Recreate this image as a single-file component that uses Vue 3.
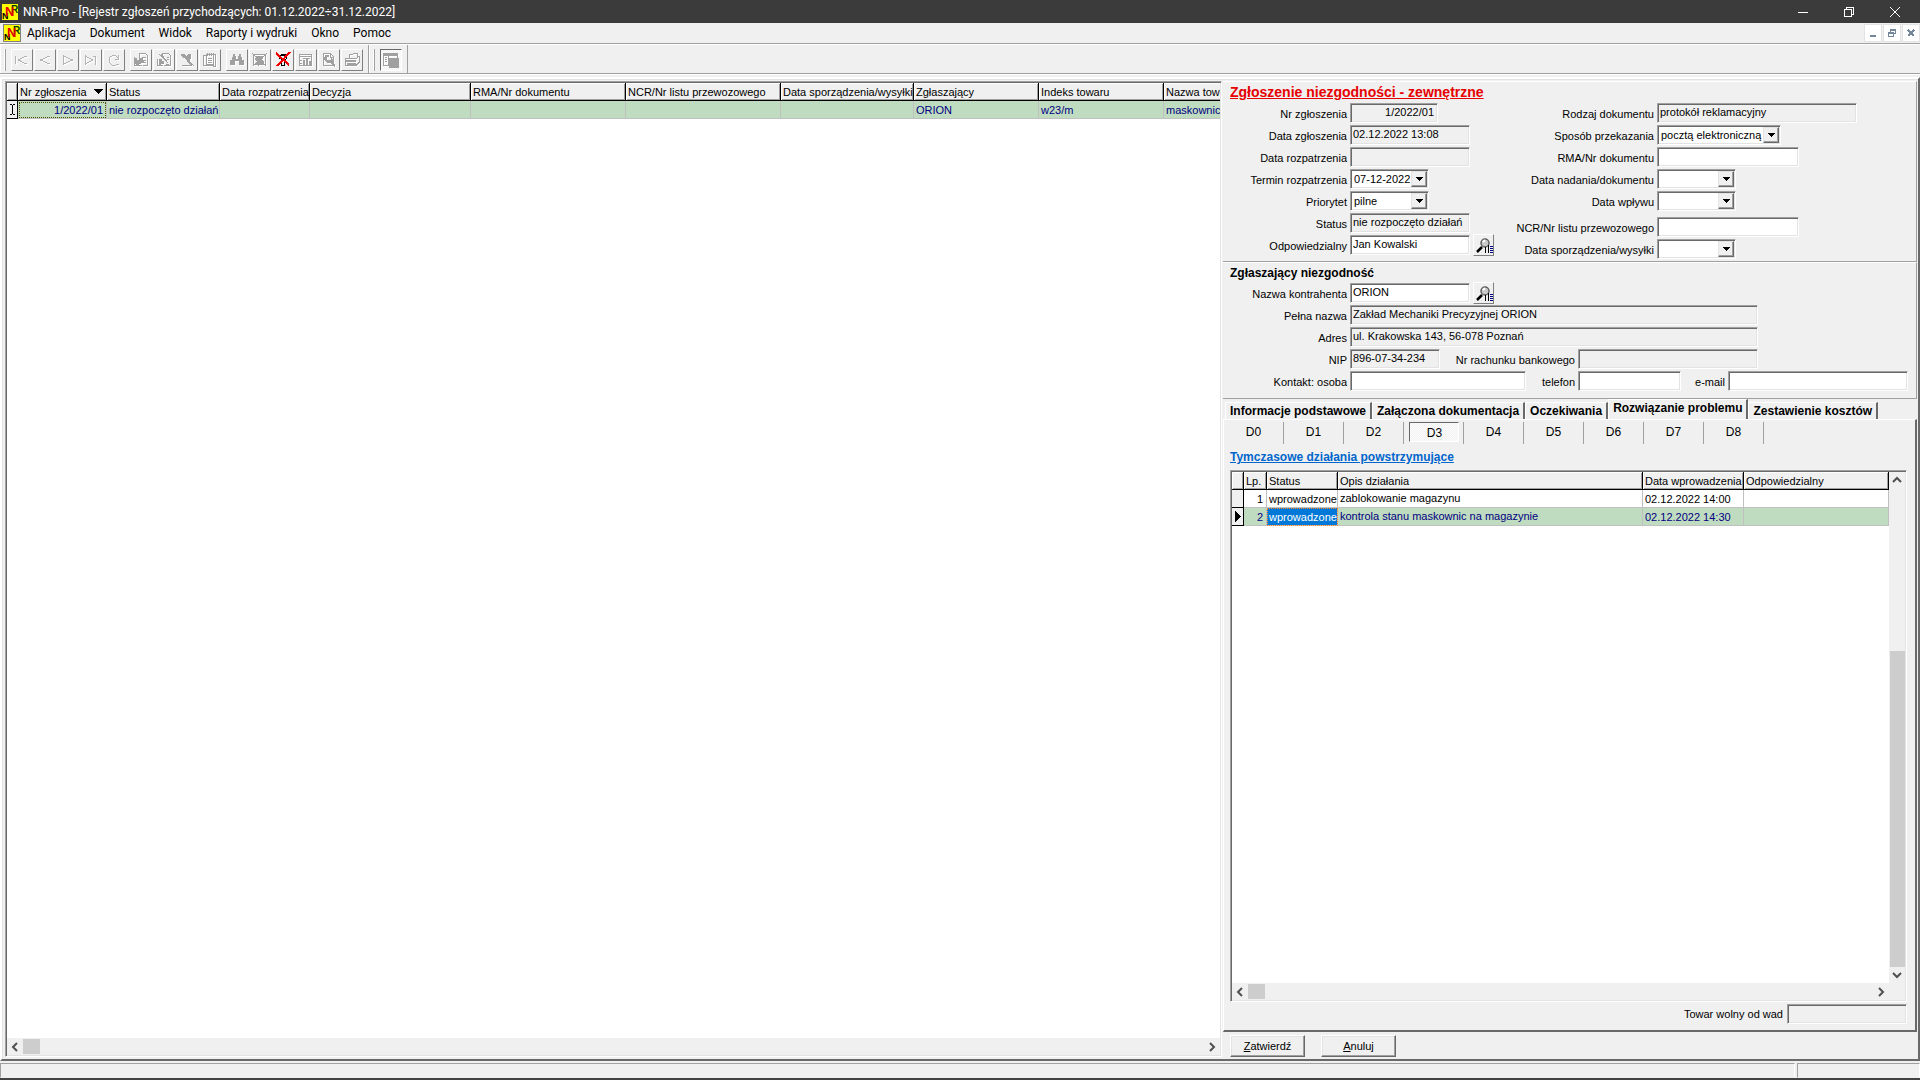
<script setup>
import { ref } from 'vue';

const menu = ['Aplikacja', 'Dokument', 'Widok', 'Raporty i wydruki', 'Okno', 'Pomoc'];

// d - outline, f - filled shape, r - red strokes on top
const toolGroups = [
  [
    { name: 'Pierwszy', d: 'M1.500 4v8M12 4.500H11L4.500 8l6.500 3.500H12M12.500 4v1M12.500 11v1', f: '' },
    { name: 'Poprzedni', d: 'M12.500 4L3.500 8l9 4', f: '' },
    { name: 'Następny', d: 'M3.500 12V4L12.500 8z', f: '' },
    { name: 'Ostatni', d: 'M2.500 12V4L9.500 8zM9.500 4.500h3v8', f: '' },
    { name: 'Odśwież', d: 'M12.500 3v4h-4M12 6C10 2 3 3 3 8s5 6 7 5M10 12.500h3', f: '' }
  ],
  [
    { name: 'Dodaj', d: 'M6.500 6V1.500h6l2 2v10h-5M9 5.500h4M10 8.500h3M10 10.500h3M1.500 4.500v9h7', f: 'M2 6h2v2h2V6h4v2H8v4H6v2H3v-2H2zM8 8h3v3H8z' },
    { name: 'Popraw', d: 'M6.500 5V1.500h6l2 2v10h-7M1.500 7v6.500h5M3 2l9 9M11 5.500h2M11 7.500h2M10 12.500h3', f: 'M3 7h3v2h2v3H5v2H3zM5 2l3 3 3 4-4-2-3-4z' },
    { name: 'Usuń', d: 'M5 5l8 8M3 13.500h9M14 13.500h1', f: 'M2 2h3l2 2 2-2h3v4l-1 3H9L5 6 2 4zM9 8l5 5-2 1-4-4z' },
    { name: 'Szczegóły', d: 'M3.500 3.500h-2v10h10v1h2v-12h-3M4.500 2.500h7v10h-7zM5 1v3M7 1v3M9 1v3M11 1v3M6 6.500h4M6 8.500h4M6 10.500h4', f: '' }
  ],
  [
    { name: 'Szukaj', d: '', f: 'M4 2h2v2h1v3h2V4h1V2h2v3h1v3h2v5h-5V9H6v4H1V8h2V5h1z' },
    { name: 'Filtruj', d: 'M1.500 2.500h12v10h-12zM0 1l4 4M15 1l-4 4M1 14l4-4M14 14l-4-4', f: 'M4 4h7v2l-1 2 2 2v2H8l-2 2-2-2 1-2-2-2z' },
    { name: 'Usuń filtr', k: 'M3.500 3.500h9M4.500 4v3M11.500 4v3M5.500 7.500h5M6.500 8v5h3v-5M6 3.500v-1h4v1', r: 'M1 1l13 12M15 0L2 14' },
    { name: 'Zestawienie', d: 'M1.500 2.500h12v11h-12zM1 4.500h12M1 8.500h3M1 11.500h3M5 6.500h7', f: 'M5 8h2v5H5zM8 6h2v7H8zM11 9h2v4h-2z' },
    { name: 'Podgląd', d: 'M2.500 13.500v-12h7l3 3v9zM9.500 2v3h3', f: 'M4 3h4v2H6v3h4V6l2 2v3l2 2v2l-2-1-3-3H6L3 8z' },
    { name: 'Drukuj', d: 'M5.500 6V2.500l8-1v4M2 6.500h10l3-2v6l-3 3H1.500V8z', f: 'M2 8h10v2H2zM3 11h9v3H3z' }
  ]
];

const columns = [
  { label: 'Nr zgłoszenia', cls: 'w-nr', value: '1/2022/01', sorted: true },
  { label: 'Status', cls: 'w-status', value: 'nie rozpoczęto działań' },
  { label: 'Data rozpatrzenia', cls: 'w-date', value: '' },
  { label: 'Decyzja', cls: 'w-dec', value: '' },
  { label: 'RMA/Nr dokumentu', cls: 'w-doc', value: '' },
  { label: 'NCR/Nr listu przewozowego', cls: 'w-doc', value: '' },
  { label: 'Data sporządzenia/wysyłki', cls: 'w-sent', value: '' },
  { label: 'Zgłaszający', cls: 'w-goods', value: 'ORION' },
  { label: 'Indeks towaru', cls: 'w-goods', value: 'w23/m' },
  { label: 'Nazwa towaru', cls: 'w-goods', value: 'maskownica' }
];

const leftFields = ref([
  { id: 'nr', label: 'Nr zgłoszenia', value: '1/2022/01', size: 's88', readonly: true, right: true },
  { id: 'data', label: 'Data zgłoszenia', value: '02.12.2022 13:08', size: 's120', readonly: true },
  { id: 'rozp', label: 'Data rozpatrzenia', value: '', size: 's120', readonly: true },
  { id: 'termin', label: 'Termin rozpatrzenia', value: '07-12-2022', size: 's79', combo: true },
  { id: 'prio', label: 'Priorytet', value: 'pilne', size: 's79', combo: true },
  { id: 'status', label: 'Status', value: 'nie rozpoczęto działań', size: 's120', readonly: true },
  { id: 'odp', label: 'Odpowiedzialny', value: 'Jan Kowalski', size: 's120', lookup: true }
]);

const rightFields = ref([
  { id: 'rodzaj', label: 'Rodzaj dokumentu', value: 'protokół reklamacyjny', size: 's200', readonly: true },
  { id: 'sposob', label: 'Sposób przekazania', value: 'pocztą elektroniczną', size: 's124', combo: true },
  { id: 'rma', label: 'RMA/Nr dokumentu', value: '', size: 's142' },
  { id: 'nadanie', label: 'Data nadania/dokumentu', value: '', size: 's79', combo: true },
  { id: 'wplyw', label: 'Data wpływu', value: '', size: 's79', combo: true },
  { id: 'ncr', label: 'NCR/Nr listu przewozowego', value: '', size: 's142', spaced: true },
  { id: 'wysylka', label: 'Data sporządzenia/wysyłki', value: '', size: 's79', combo: true }
]);

const contact = ref({
  nazwa: 'ORION',
  pelna: 'Zakład Mechaniki Precyzyjnej ORION',
  adres: 'ul. Krakowska 143, 56-078 Poznań',
  nip: '896-07-34-234',
  rachunek: '',
  osoba: '',
  telefon: '',
  email: ''
});

const tabs = ['Informacje podstawowe', 'Załączona dokumentacja', 'Oczekiwania', 'Rozwiązanie problemu', 'Zestawienie kosztów'];
const activeTab = ref(3);
const steps = ['D0', 'D1', 'D2', 'D3', 'D4', 'D5', 'D6', 'D7', 'D8'];
const activeStep = ref('D3');

const actions = [
  { lp: 1, status: 'wprowadzone', opis: 'zablokowanie magazynu', data: '02.12.2022 14:00' },
  { lp: 2, status: 'wprowadzone', opis: 'kontrola stanu maskownic na magazynie', data: '02.12.2022 14:30' }
];
const selected = ref(2);
const free = ref('');
</script>

<template>
  <div class="app">
    <header class="titlebar">
      <svg class="logo" viewBox="0 0 16 16">
        <rect width="16" height="16" fill="#ff0" />
        <text x="9" y="9" class="logo-r">R</text>
        <text x="0" y="15" class="logo-n">N</text>
        <text x="3" y="12" class="logo-n2">N</text>
      </svg>
      <span class="caption">NNR-Pro - [Rejestr zgłoszeń przychodzących: 01.12.2022÷31.12.2022]</span>
      <div class="win-buttons">
        <button aria-label="Minimalizuj"><svg viewBox="0 0 10 10"><path d="M0 5.500h10" /></svg></button>
        <button aria-label="Przywróć"><svg viewBox="0 0 10 10"><path d="M.5 2.500h7v7h-7zM2.500 2V.5h7v7H8" /></svg></button>
        <button aria-label="Zamknij"><svg viewBox="0 0 10 10" class="smooth"><path d="M0 0l10 10M10 0L0 10" /></svg></button>
      </div>
    </header>

    <nav class="menubar">
      <svg class="logo framed" viewBox="0 0 16 16">
        <rect width="16" height="16" fill="#ff0" />
        <text x="9" y="9" class="logo-r">R</text>
        <text x="0" y="15" class="logo-n">N</text>
        <text x="3" y="12" class="logo-n2">N</text>
      </svg>
      <button v-for="m in menu" :key="m" class="menu-item">{{ m }}</button>
      <div class="mdi-buttons">
        <button aria-label="Minimalizuj okno"><svg viewBox="0 0 10 10"><path d="M2 8h6" /></svg></button>
        <button aria-label="Przywróć okno"><svg viewBox="0 0 10 10" class="thin"><path d="M3.500 4V1.500h5v4H7M3 2h6M1.500 4.500h5v4h-5zM1 5h6" /></svg></button>
        <button aria-label="Zamknij okno"><svg viewBox="0 0 10 10"><path d="M2 2l6 6M8 2L2 8" /></svg></button>
      </div>
    </nav>

    <div class="toolbar">
      <div class="band">
        <span class="grip"></span>
        <div v-for="(group, g) in toolGroups" :key="g" class="tool-group">
          <button v-for="t in group" :key="t.name" class="tool" :aria-label="t.name">
            <svg viewBox="0 0 16 16">
              <g v-if="!t.r" class="off">
                <path :d="t.d" class="line" :class="{ faint: g === 0 }" />
                <path :d="t.f" class="fill" />
              </g>
              <g v-else>
                <path :d="t.k" class="black" />
                <path :d="t.r" class="red" />
              </g>
            </svg>
          </button>
        </div>
      </div>
      <div class="band">
        <span class="grip"></span>
        <div class="tool-group">
          <button class="tool pressed" aria-label="Panel szczegółów">
            <svg viewBox="0 0 16 16">
              <g class="off">
                <path d="M.5 1.500h14v12H.500zM1 3.500h13M5.500 4v10M2 5.500h2M2 7.500h2M2 9.500h2" class="line" />
                <path d="M1 2h13v2H1zM6 6h10v10H6z" class="fill" />
              </g>
            </svg>
          </button>
        </div>
      </div>
    </div>

    <main class="mdi">
      <div class="child">
        <section class="list sunken">
          <div class="list-view">
            <table class="grid register">
              <thead>
                <tr>
                  <th class="w-ind"></th>
                  <th v-for="c in columns" :key="c.label" :class="c.cls">
                    {{ c.label }}
                    <svg v-if="c.sorted" class="sort" viewBox="0 0 9 5"><path d="M0 0h9L4.500 5z" /></svg>
                  </th>
                </tr>
              </thead>
              <tbody>
                <tr class="current">
                  <td class="ind">
                    <svg class="ibeam" viewBox="0 0 7 11"><path d="M1 .5h2M4 .5h2M1 10.500h2M4 10.500h2M3.500 1v9" /></svg>
                  </td>
                  <td v-for="c in columns" :key="c.label" :class="{ focus: c.sorted }">{{ c.value }}</td>
                </tr>
              </tbody>
            </table>
          </div>
          <div class="hscroll">
            <svg viewBox="0 0 16 16"><path d="M10 4L6 8l4 4" /></svg>
            <span class="thumb"></span>
            <svg class="end" viewBox="0 0 16 16"><path d="M6 4l4 4-4 4" /></svg>
          </div>
        </section>

        <section class="details">
          <div class="box">
            <h1>Zgłoszenie niezgodności - zewnętrzne</h1>
            <div class="form-cols">
              <div v-for="(list, i) in [leftFields, rightFields]" :key="i" class="form" :class="{ second: i === 1 }">
                <div v-for="f in list" :key="f.id" class="row" :class="{ spaced: f.spaced }">
                  <label :for="f.id">{{ f.label }}</label>
                  <div v-if="f.combo" class="combo sunken" :class="f.size">
                    <select :id="f.id" v-model="f.value">
                      <option :value="f.value">{{ f.value }}</option>
                    </select>
                    <span class="drop"><svg viewBox="0 0 7 4"><path d="M0 0h7L3.500 4z" /></svg></span>
                  </div>
                  <input v-else :id="f.id" v-model="f.value" class="sunken" :class="[f.size, { right: f.right }]" :readonly="f.readonly" />
                  <button v-if="f.lookup" class="lookup" aria-label="Wybierz osobę">
                    <svg viewBox="0 0 18 18">
                      <path d="M2 16l5-5" stroke="#000" stroke-width="2.500" />
                      <circle cx="10" cy="7" r="4" fill="#c8c8c8" stroke="#606060" stroke-width="1.500" />
                      <path d="M8 6l2-2" stroke="#fff" stroke-width="2" />
                      <path d="M10.500 11v6M13.500 9v8" stroke="#000" />
                      <path d="M15 10.500h3M15 12.500h3M15 14.500h3M15 16.500h3" stroke="#000080" />
                    </svg>
                  </button>
                </div>
              </div>
            </div>
          </div>

          <div class="box contact">
            <h2>Zgłaszający niezgodność</h2>
            <div class="form">
              <div class="row">
                <label for="nazwa">Nazwa kontrahenta</label>
                <input id="nazwa" v-model="contact.nazwa" class="sunken s120" />
                <button class="lookup" aria-label="Wybierz kontrahenta">
                  <svg viewBox="0 0 18 18">
                    <path d="M2 16l5-5" stroke="#000" stroke-width="2.500" />
                    <circle cx="10" cy="7" r="4" fill="#c8c8c8" stroke="#606060" stroke-width="1.500" />
                    <path d="M8 6l2-2" stroke="#fff" stroke-width="2" />
                    <path d="M10.500 11v6M13.500 9v8" stroke="#000" />
                    <path d="M15 10.500h3M15 12.500h3M15 14.500h3M15 16.500h3" stroke="#000080" />
                  </svg>
                </button>
              </div>
              <div class="row">
                <label for="pelna">Pełna nazwa</label>
                <input id="pelna" v-model="contact.pelna" class="sunken s408" readonly />
              </div>
              <div class="row">
                <label for="adres">Adres</label>
                <input id="adres" v-model="contact.adres" class="sunken s408" readonly />
              </div>
              <div class="row">
                <label for="nip">NIP</label>
                <input id="nip" v-model="contact.nip" class="sunken s90" readonly />
                <label for="rachunek" class="mid-nip">Nr rachunku bankowego</label>
                <input id="rachunek" v-model="contact.rachunek" class="sunken s180" readonly />
              </div>
              <div class="row">
                <label for="osoba">Kontakt: osoba</label>
                <input id="osoba" v-model="contact.osoba" class="sunken s176" />
                <label for="telefon" class="mid">telefon</label>
                <input id="telefon" v-model="contact.telefon" class="sunken s103" />
                <label for="email" class="mid-mail">e-mail</label>
                <input id="email" v-model="contact.email" class="sunken s180" />
              </div>
            </div>
          </div>

          <div class="tabs">
            <button v-for="(t, i) in tabs" :key="t" :class="{ active: i === activeTab }" @click="activeTab = i">{{ t }}</button>
          </div>
          <div class="page">
            <div class="steps">
              <div v-for="s in steps" :key="s" class="step">
                <button :class="{ active: s === activeStep }" @click="activeStep = s">{{ s }}</button>
              </div>
            </div>
            <div class="page-body">
              <h3><a href="#">Tymczasowe działania powstrzymujące</a></h3>
              <div class="actions sunken">
                <div class="actions-body">
                  <div class="actions-view">
                    <table class="grid">
                      <thead>
                        <tr>
                          <th class="w-ind2"></th>
                          <th class="w-lp">Lp.</th>
                          <th class="w-st">Status</th>
                          <th>Opis działania</th>
                          <th class="w-in">Data wprowadzenia</th>
                          <th class="w-resp">Odpowiedzialny</th>
                        </tr>
                      </thead>
                      <tbody>
                        <tr v-for="a in actions" :key="a.lp" :class="{ current: a.lp === selected }" @click="selected = a.lp">
                          <td class="ind">
                            <svg v-if="a.lp === selected" class="arrow" viewBox="0 0 6 11"><path d="M0 0l6 5.500L0 11z" /></svg>
                          </td>
                          <td class="num">{{ a.lp }}</td>
                          <td :class="{ picked: a.lp === selected }">{{ a.status }}</td>
                          <td class="desc">{{ a.opis }}</td>
                          <td>{{ a.data }}</td>
                          <td></td>
                        </tr>
                      </tbody>
                    </table>
                  </div>
                  <div class="vscroll">
                    <svg viewBox="0 0 16 16"><path d="M4 10l4-4 4 4" /></svg>
                    <div class="track"><span class="vthumb"></span></div>
                    <svg viewBox="0 0 16 16"><path d="M4 6l4 4 4-4" /></svg>
                  </div>
                </div>
                <div class="hscroll inner">
                  <svg viewBox="0 0 16 16"><path d="M10 4L6 8l4 4" /></svg>
                  <span class="thumb"></span>
                  <svg class="end" viewBox="0 0 16 16"><path d="M6 4l4 4-4 4" /></svg>
                </div>
              </div>
              <div class="summary">
                <label for="wolny">Towar wolny od wad</label>
                <input id="wolny" v-model="free" class="sunken s120" readonly />
              </div>
            </div>
          </div>

          <div class="buttons">
            <button><u>Z</u>atwierdź</button>
            <button><u>A</u>nuluj</button>
          </div>
        </section>
      </div>
    </main>

    <footer class="statusbar">
      <div class="cell grow"></div>
      <div class="cell"></div>
    </footer>
  </div>
</template>

<style>
body { background: #f0f0f0; }
</style>

<style scoped>
.app { height: 100vh; min-height: 700px; display: flex; flex-direction: column; background: #f0f0f0; color: #000; font: 11px/14px "Liberation Sans", Arial, sans-serif; border-bottom: 2px solid #434343; box-sizing: border-box; overflow: hidden; }
.app * { box-sizing: border-box; }
button, input, select { font: inherit; color: inherit; margin: 0; padding: 0; border-radius: 0; outline: none; }
button { background: none; border: none; white-space: nowrap; }
svg { display: block; fill: none; shape-rendering: crispEdges; }
.sunken { border: 1px solid; border-color: #a0a0a0 #fff #fff #a0a0a0; box-shadow: inset 1px 1px #696969, inset -1px -1px #e3e3e3; }

.titlebar { height: 23px; flex: none; display: flex; align-items: center; background: #3b3b3b; color: #fff; font: 12px/16px Roboto, "Noto Sans", sans-serif; }
.logo { width: 16px; height: 16px; margin: 0 5px 0 2px; }
.logo.framed { outline: 1px solid #808080; margin: 0 7px 0 4px; }
.logo text { font-family: "Liberation Sans", sans-serif; font-weight: bold; }
.logo-n { font-size: 9px; fill: #000; }
.logo-n2 { font-size: 13px; fill: #e00000; }
.logo-r { font-size: 10px; fill: #004000; }
.win-buttons { margin-left: auto; display: flex; padding-right: 2px; }
.win-buttons button { width: 46px; height: 20px; display: flex; align-items: center; justify-content: center; }
.win-buttons svg { width: 10px; height: 10px; stroke: #fff; }
.win-buttons svg.smooth { shape-rendering: auto; overflow: visible; }

.menubar { height: 21px; flex: none; display: flex; align-items: center; background: #f0f0f0; border-bottom: 1px solid #a0a0a0; font: 12px/16px Roboto, "Noto Sans", sans-serif; }
.menubar .menu-item { margin-right: 14px; }
.mdi-buttons { margin-left: auto; display: flex; gap: 1px; }
.mdi-buttons button { width: 18px; height: 18px; background: #fff; border: 1px solid #e3e3e3; display: flex; align-items: center; justify-content: center; }
.mdi-buttons svg { width: 10px; height: 10px; stroke: #74869a; stroke-width: 2; }
.mdi-buttons svg.thin { stroke-width: 1; }

.toolbar { height: 30px; flex: none; display: flex; border-top: 1px solid #fff; border-bottom: 1px solid #a0a0a0; }
.band { display: flex; align-items: center; gap: 5px; padding: 1px 5px 0 3px; border-right: 1px solid #a0a0a0; border-left: 1px solid #fff; }
.grip { width: 2px; height: 22px; border-right: 1px solid #a0a0a0; border-left: 1px solid #fff; }
.tool-group { display: flex; gap: 1px; }
.tool { width: 22px; height: 22px; border: 1px solid; border-color: #fff #808080 #808080 #fff; display: flex; align-items: center; justify-content: center; }
.tool.pressed { border-color: #696969 #fff #fff #696969; background: repeating-conic-gradient(#fff 0 25%, #f0f0f0 0 50%) 0 0 / 2px 2px; }
.tool svg { width: 16px; height: 16px; }
.off { filter: drop-shadow(1px 1px 0 #fff); }
.line { stroke: #a0a0a0; }
.line.faint { stroke: #b4b4b4; }
.fill { fill: #a0a0a0; }
.black { stroke: #000; }
.red { stroke: #f00000; stroke-width: 2; }

.mdi { flex: 1; min-height: 0; display: flex; border-top: 1px solid #fff; padding: 2px 0; }
.child { flex: 1; min-width: 0; display: flex; gap: 1px; padding: 2px 1px 0 3px; border: 2px solid; border-color: #fff #696969 #696969 #fff; box-shadow: inset 1px 1px #e3e3e3; }

.list { flex: 1; min-width: 0; display: flex; flex-direction: column; padding: 1px; background: #fff; margin-bottom: 2px; }
.list-view { flex: 1; overflow: hidden; }
.grid { border-collapse: separate; border-spacing: 0; table-layout: fixed; width: 100%; }
.grid.register { width: 1282px; }
.grid th, .grid td { height: 18px; padding: 0 0 0 2px; text-align: left; font-weight: normal; white-space: nowrap; overflow: hidden; line-height: 16px; }
.grid th { position: relative; background: #f0f0f0; border-right: 1px solid #000; border-bottom: 1px solid #000; box-shadow: inset 1px 1px #fff, inset -1px -1px #a0a0a0; }
.grid td { border-right: 1px solid #c0c0c0; border-bottom: 1px solid #c0c0c0; }
.grid .current td { background: #c0dcc0; color: #000080; }
.grid td.ind, .grid .current td.ind { background: #f0f0f0; border-right-color: #000; border-bottom-color: #000; padding: 0; }
.grid td.focus { text-align: right; padding-right: 3px; outline: 1px dotted #505000; outline-offset: -2px; }
.grid td.num { text-align: right; padding-right: 3px; }
.grid .current td.picked { background: #0078d7; color: #fff; outline: 1px dotted #ff8728; outline-offset: -1px; }
.grid td.desc { line-height: 14px; padding-bottom: 2px; }
.sort { position: absolute; right: 3px; top: 6px; width: 9px; height: 5px; fill: #000; }
.ibeam { width: 7px; height: 11px; margin: 0 auto; stroke: #000; }
.arrow { width: 6px; height: 11px; margin: 0 auto; fill: #000; }
.w-ind { width: 11px; }
.w-nr { width: 89px; }
.w-status { width: 113px; }
.w-date { width: 90px; }
.w-dec { width: 161px; }
.w-doc { width: 155px; }
.w-sent { width: 133px; }
.w-goods { width: 125px; }
.w-ind2 { width: 12px; }
.w-lp { width: 23px; }
.w-st { width: 71px; }
.w-in { width: 101px; }
.w-resp { width: 145px; }

.hscroll { flex: none; height: 17px; display: flex; align-items: center; background: #f0f0f0; }
.hscroll svg, .vscroll svg { width: 16px; height: 16px; stroke: #505050; stroke-width: 2; shape-rendering: auto; }
.hscroll .thumb { width: 17px; height: 15px; background: #cdcdcd; }
.hscroll .end { margin-left: auto; }
.hscroll.inner { padding-right: 16px; }

.details { width: 694px; flex: none; display: flex; flex-direction: column; }
.box { border-top: 1px solid #fff; border-bottom: 1px solid #a0a0a0; border-right: 1px solid #a0a0a0; padding-bottom: 2px; }
.box.contact { padding-bottom: 7px; }
.box h1 { margin: 0; padding-left: 7px; font-size: 14px; line-height: 21px; color: #e60000; text-decoration: underline; }
.box h2 { margin: 0; padding-left: 7px; font-size: 12px; line-height: 20px; }
.form-cols { display: grid; grid-template-columns: 277px 1fr; }
.form { display: flex; flex-direction: column; gap: 2px; }
.row { display: flex; align-items: center; gap: 3px; height: 20px; white-space: nowrap; }
.row.spaced { margin-top: 4px; }
.row label { width: 124px; text-align: right; padding-top: 2px; }
.second .row label { width: 154px; }
.row label.mid-nip { width: 132px; }
.row label.mid { width: 46px; }
.row label.mid-mail { width: 41px; }
.s79 { width: 79px; }
.s88 { width: 88px; }
.s90 { width: 90px; }
.s103 { width: 103px; }
.s120 { width: 120px; }
.s124 { width: 124px; }
.s142 { width: 142px; }
.s176 { width: 176px; }
.s180 { width: 180px; }
.s200 { width: 200px; }
.s408 { width: 408px; }
input { height: 20px; background: #fff; padding: 0 3px 2px 2px; }
input[readonly] { background: #f0f0f0; }
input.right { text-align: right; }
.combo { display: flex; height: 20px; padding: 1px; background: #fff; }
.combo select { appearance: none; flex: 1; min-width: 0; height: 16px; border: none; background: none; padding: 0 0 0 2px; }
.drop { width: 16px; height: 16px; flex: none; background: #f0f0f0; border: 1px solid; border-color: #e3e3e3 #696969 #696969 #e3e3e3; box-shadow: inset -1px -1px #a0a0a0; display: flex; align-items: center; justify-content: center; }
.drop svg { width: 7px; height: 4px; fill: #000; }
.lookup { width: 21px; height: 22px; border: 1px solid; border-color: #fff #808080 #808080 #fff; display: flex; align-items: center; justify-content: center; }
.lookup svg { width: 18px; height: 18px; flex: none; shape-rendering: auto; }

.tabs { height: 20px; flex: none; display: flex; align-items: flex-end; padding-left: 2px; }
.tabs button { height: 17px; padding: 0 4px; font-weight: bold; font-size: 12px; line-height: 16px; border: 1px solid; border-width: 1px 2px 0 1px; border-color: #fff #696969 #fff #fff; }
.tabs button.active { height: 20px; padding-bottom: 3px; }
.page { flex: 1; min-height: 0; display: flex; flex-direction: column; padding: 2px 0 6px; border: 1px solid; border-width: 1px 2px 2px 1px; border-color: #fff #696969 #696969 #fff; }
.page-body { flex: 1; min-height: 0; display: flex; flex-direction: column; padding: 0 8px 0 6px; }
.steps { height: 22px; flex: none; display: flex; }
.step { width: 60px; display: flex; justify-content: center; border-right: 1px solid #a0a0a0; }
.step button { width: 50px; height: 20px; font-size: 12px; line-height: 18px; }
.step button.active { padding: 1px 0 0 2px; border: 1px solid; border-color: #696969 #fff #fff #696969; background: repeating-conic-gradient(#fff 0 25%, #f0f0f0 0 50%) 0 0 / 2px 2px; }
.page h3 { margin: 0; font-size: 12px; line-height: 26px; }
.page h3 a { color: #0066cc; }
.actions { flex: 1; min-height: 0; display: flex; flex-direction: column; padding: 1px; background: #fff; }
.actions-body { flex: 1; min-height: 0; display: flex; }
.actions-view { flex: 1; min-width: 0; overflow: hidden; }
.vscroll { width: 16px; flex: none; display: flex; flex-direction: column; align-items: center; background: #f0f0f0; }
.track { flex: 1; width: 15px; display: flex; flex-direction: column; justify-content: flex-end; }
.vthumb { height: 66%; background: #cdcdcd; }
.summary { display: flex; justify-content: flex-end; align-items: center; gap: 4px; margin-top: 2px; }

.buttons { display: flex; gap: 16px; padding: 3px 7px 2px; }
.buttons button { width: 75px; height: 22px; border: 1px solid; border-color: #fff #696969 #696969 #fff; box-shadow: inset -1px -1px #a0a0a0, inset 1px 1px #e3e3e3; }

.statusbar { height: 15px; flex: none; display: flex; gap: 2px; }
.cell { width: 123px; border: 1px solid; border-color: #a0a0a0 #fff #f0f0f0 #a0a0a0; }
.cell.grow { width: auto; flex: 1; }
</style>
